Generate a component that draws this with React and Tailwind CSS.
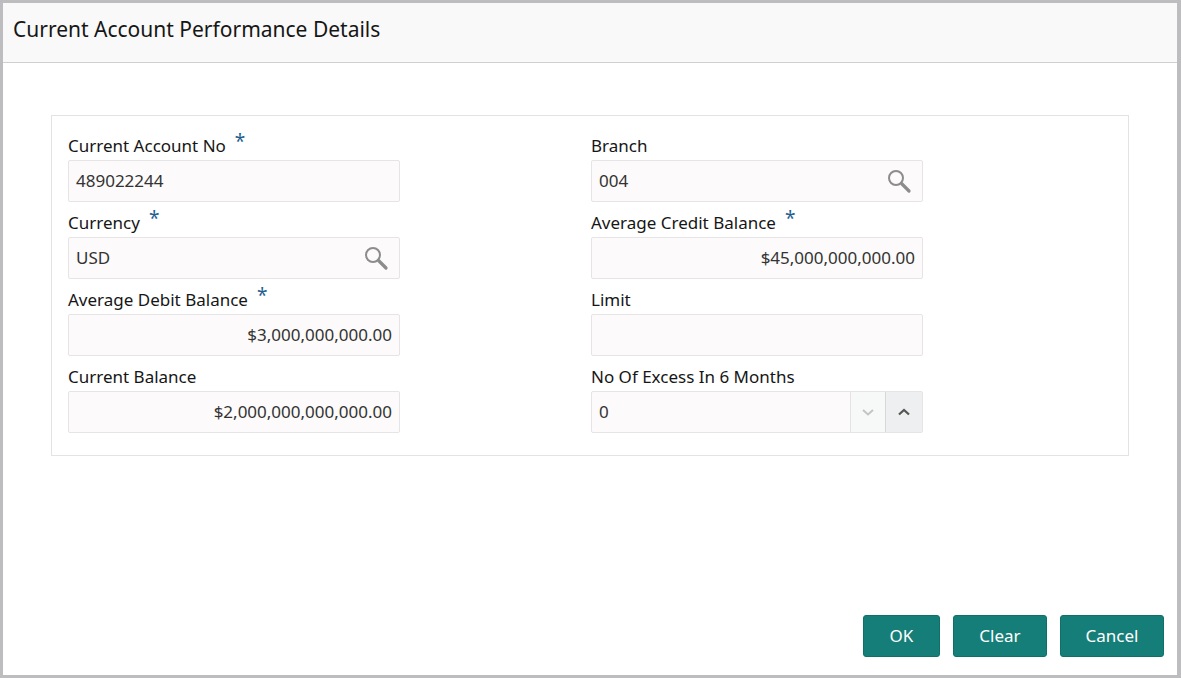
import React from "react";

const font = { fontFamily: '"Noto Sans", "Open Sans", sans-serif' };

function SearchIcon() {
  return (
    <svg width="26" height="26" viewBox="0 0 26 26" fill="none">
      <circle cx="10" cy="10" r="7" stroke="#8c8c8c" strokeWidth="2" />
      <path d="M15.5 15.5 L23 23" stroke="#8c8c8c" strokeWidth="3.2" strokeLinecap="round" />
    </svg>
  );
}

function Label({ text, required }) {
  return (
    <div className="h-[22px] flex items-center text-[17px] text-[#161616] leading-none">
      <span>{text}</span>
      {required && (
        <span className="ml-[9px] text-[#1f5f8f] text-[19px] relative -top-[4px]">*</span>
      )}
    </div>
  );
}

function Box({ children, align = "left", search }) {
  return (
    <div className="w-[332px] h-[42px] bg-[#fcfafa] border border-[#e6e4e4] rounded-[2px] flex items-center text-[17px] text-[#333]">
      <div className={`flex-1 px-[7px] ${align === "right" ? "text-right" : ""}`}>{children}</div>
      {search && (
        <div className="w-[46px] h-full flex items-center justify-center">
          <SearchIcon />
        </div>
      )}
    </div>
  );
}

function Field({ label, required, children }) {
  return (
    <div className="flex flex-col gap-[4px]">
      <Label text={label} required={required} />
      {children}
    </div>
  );
}

function Stepper() {
  return (
    <div className="w-[332px] h-[42px] bg-[#fcfafa] border border-[#e6e4e4] rounded-[2px] flex items-stretch text-[17px] text-[#333]">
      <div className="flex-1 px-[7px] flex items-center">0</div>
      <div className="w-[35px] border-l border-[#e4e4e4] bg-[#f7f8f8] flex items-center justify-center">
        <svg width="14" height="10" viewBox="0 0 14 10">
          <path d="M2 3 L7 7.5 L12 3" stroke="#c4c4c4" strokeWidth="2" fill="none" />
        </svg>
      </div>
      <div className="w-[37px] border-l border-[#d8d8d8] bg-[#eeeff0] flex items-center justify-center">
        <svg width="14" height="10" viewBox="0 0 14 10">
          <path d="M2 7.5 L7 3 L12 7.5" stroke="#555" strokeWidth="2.2" fill="none" />
        </svg>
      </div>
    </div>
  );
}

export default function App() {
  return (
    <div
      className="w-[1181px] h-[678px] bg-white border-t-[3px] border-l-[3px] border-r-[4px] border-b-[3px] border-[#bdbdbf] flex flex-col"
      style={font}
    >
      {/* HEADER */}
      <div className="h-[60px] bg-[#f9f9f9] border-b border-[#cfcfcf] flex items-center px-[10px]">
        <h1 className="text-[21px] text-[#161616] -mt-[5px]">Current Account Performance Details</h1>
      </div>

      {/* BODY */}
      <div className="flex-1 pt-[52px] pl-[48px] pr-[48px]">
        <div className="border border-[#e3e3e3] h-[341px] pl-[16px] pt-[18px]">
          <div className="grid grid-cols-[332px_332px] gap-x-[191px] gap-y-[9px]">
            <Field label="Current Account No" required>
              <Box>489022244</Box>
            </Field>
            <Field label="Branch">
              <Box search>004</Box>
            </Field>
            <Field label="Currency" required>
              <Box search>USD</Box>
            </Field>
            <Field label="Average Credit Balance" required>
              <Box align="right">$45,000,000,000.00</Box>
            </Field>
            <Field label="Average Debit Balance" required>
              <Box align="right">$3,000,000,000.00</Box>
            </Field>
            <Field label="Limit">
              <Box />
            </Field>
            <Field label="Current Balance">
              <Box align="right">$2,000,000,000,000.00</Box>
            </Field>
            <Field label="No Of Excess In 6 Months">
              <Stepper />
            </Field>
          </div>
        </div>
      </div>

      {/* FOOTER */}
      <div className="flex justify-end gap-[13px] pr-[13px] pb-[18px]">
        <button className="w-[77px] h-[42px] rounded-[3px] bg-[#167e78] border border-[#0f7069] text-white text-[17px]">OK</button>
        <button className="w-[94px] h-[42px] rounded-[3px] bg-[#167e78] border border-[#0f7069] text-white text-[17px]">Clear</button>
        <button className="w-[104px] h-[42px] rounded-[3px] bg-[#167e78] border border-[#0f7069] text-white text-[17px]">Cancel</button>
      </div>
    </div>
  );
}
